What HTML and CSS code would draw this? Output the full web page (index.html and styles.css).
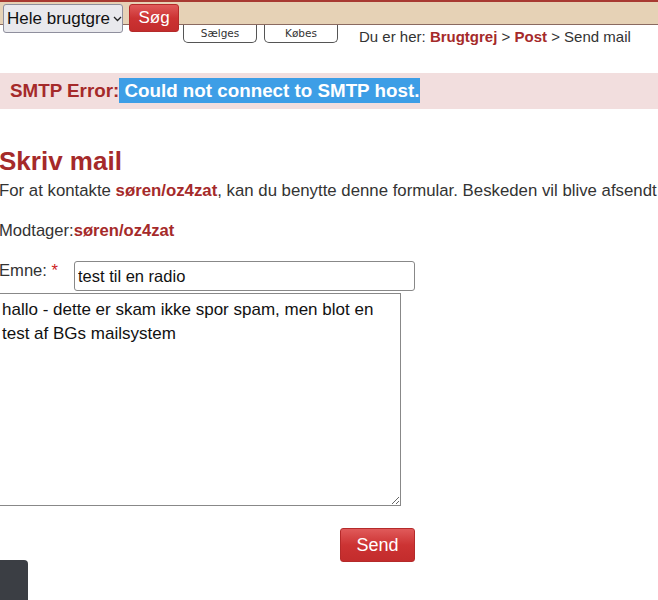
FILE: index.html
```html
<!DOCTYPE html>
<html lang="da">
<head>
<meta charset="utf-8">
<title>Send mail</title>
<link rel="stylesheet" href="styles.css">
</head>
<body>
<div class="page">
  <header class="topbar">
    <div class="band">
      <div class="search">
        <div class="select">Hele brugtgre<span class="chev"><svg width="9" height="6" viewBox="0 0 9 6"><path d="M1 1l3.5 3.5L8 1" fill="none" stroke="#222" stroke-width="1.3"/></svg></span></div>
        <button class="btn-red btn-sog">Søg</button>
      </div>
    </div>
    <div class="under">
      <div class="tabs">
        <span class="tab">Sælges</span>
        <span class="tab">Købes</span>
      </div>
      <div class="crumbs">Du er her: <a href="#">Brugtgrej</a> &gt; <a href="#">Post</a> &gt; Send mail</div>
    </div>
  </header>

  <div class="error"><b class="err-label">SMTP Error:</b><span class="sel"> Could not connect to SMTP host.</span></div>

  <main class="content">
    <h1>Skriv mail</h1>
    <p class="intro">For at kontakte <a href="#">søren/oz4zat</a>, kan du benytte denne formular. Beskeden vil blive afsendt</p>
    <p class="rcpt">Modtager:<a href="#">søren/oz4zat</a></p>
    <div class="row">
      <label class="lbl">Emne: <span class="req">*</span></label>
      <input class="field" type="text" value="test til en radio">
    </div>
    <textarea class="msg">hallo - dette er skam ikke spor spam, men blot en test af BGs mailsystem</textarea>
    <div class="actions"><button class="btn-red btn-send">Send</button></div>
  </main>
</div>
<div class="widget"></div>
</body>
</html>
```
FILE: styles.css
```css
html, body { margin: 0; padding: 0; }
body {
  font-family: "Liberation Sans", Arial, sans-serif;
  color: #333;
  background: #fff;
  overflow: hidden;
  width: 658px;
  height: 600px;
}
.page { width: 658px; }
a { color: #a52a2a; font-weight: bold; text-decoration: none; }

.band {
  height: 22px;
  background: #e6d2b6;
  border-top: 2px solid #a83a32;
  border-bottom: 1px solid #8a6a60;
  position: relative;
}
.search {
  display: flex;
  gap: 6px;
  padding: 2px 0 0 3px;
  position: relative;
  z-index: 2;
}
.select {
  box-sizing: border-box;
  width: 120px;
  height: 29px;
  background: #e9e9ed;
  border: 1px solid #8f8f9d;
  border-radius: 3px;
  font-size: 17px;
  color: #111;
  display: flex;
  align-items: center;
  padding-left: 3px;
}
.chev { margin-left: 3px; display: flex; }
.btn-red {
  font-family: "Liberation Sans", Arial, sans-serif;
  color: #fff;
  border: 1px solid #b52a2a;
  border-radius: 3px;
  background: linear-gradient(#e05a5a, #cc3333 50%, #c32c2c);
  padding: 0;
  cursor: pointer;
}
.btn-sog {
  width: 50px;
  height: 28px;
  font-size: 17px;
}
.under {
  display: flex;
  align-items: flex-start;
}
.tabs {
  display: flex;
  gap: 7px;
  margin-left: 183px;
}
.tab {
  box-sizing: border-box;
  width: 74px;
  height: 18px;
  border: 1px solid #555;
  border-top: none;
  border-radius: 0 0 5px 5px;
  background: #fff;
  font-family: "DejaVu Sans", Verdana, sans-serif;
  font-size: 10.5px;
  color: #333;
  text-align: center;
  line-height: 16px;
}
.crumbs {
  margin-left: 21px;
  margin-top: 3px;
  font-size: 15px;
  color: #333;
  white-space: nowrap;
}

.error {
  margin-top: 28px;
  height: 36px;
  background: #f2dede;
  font-size: 18.8px;
  font-weight: bold;
  line-height: 36px;
  padding-left: 10px;
  width: 648px;
  white-space: nowrap;
}
.err-label { color: #a52a2a; }
.sel { background: #3d9ee6; color: #fff; padding: 2px 1px 2px 0; }

.content { margin-left: -1px; }
h1 {
  margin: 37px 0 0;
  font-size: 26px;
  color: #a52a2a;
  line-height: 30px;
}
.intro { margin: 5px 0 0; font-size: 16.8px; line-height: 20px; white-space: nowrap; }
.rcpt { margin: 20px 0 0; font-size: 16.6px; line-height: 20px; }
.row {
  display: flex;
  align-items: flex-start;
  margin-top: 20px;
}
.lbl { font-size: 16.6px; width: 75px; }
.req { color: #cc2222; }
.field {
  box-sizing: border-box;
  width: 341px;
  height: 30px;
  border: 1px solid #888;
  border-radius: 3px;
  font-family: "Liberation Sans", Arial, sans-serif;
  font-size: 16.5px;
  padding: 0 3px;
  color: #111;
}
.msg {
  display: block;
  box-sizing: border-box;
  margin: 2px 0 0 -2px;
  width: 404px;
  height: 213px;
  border: 1px solid #888;
  font-family: "Liberation Sans", Arial, sans-serif;
  font-size: 17px;
  line-height: 24px;
  padding: 4px 4px 2px;
  color: #111;
  resize: both;
}
.actions {
  width: 416px;
  display: flex;
  justify-content: flex-end;
  margin-top: 22px;
}
.btn-send {
  width: 75px;
  height: 34px;
  font-size: 18px;
}
.widget {
  position: fixed;
  left: 0;
  bottom: 0;
  width: 28px;
  height: 40px;
  background: #3b3e44;
  border-radius: 0 4px 0 0;
}
```
